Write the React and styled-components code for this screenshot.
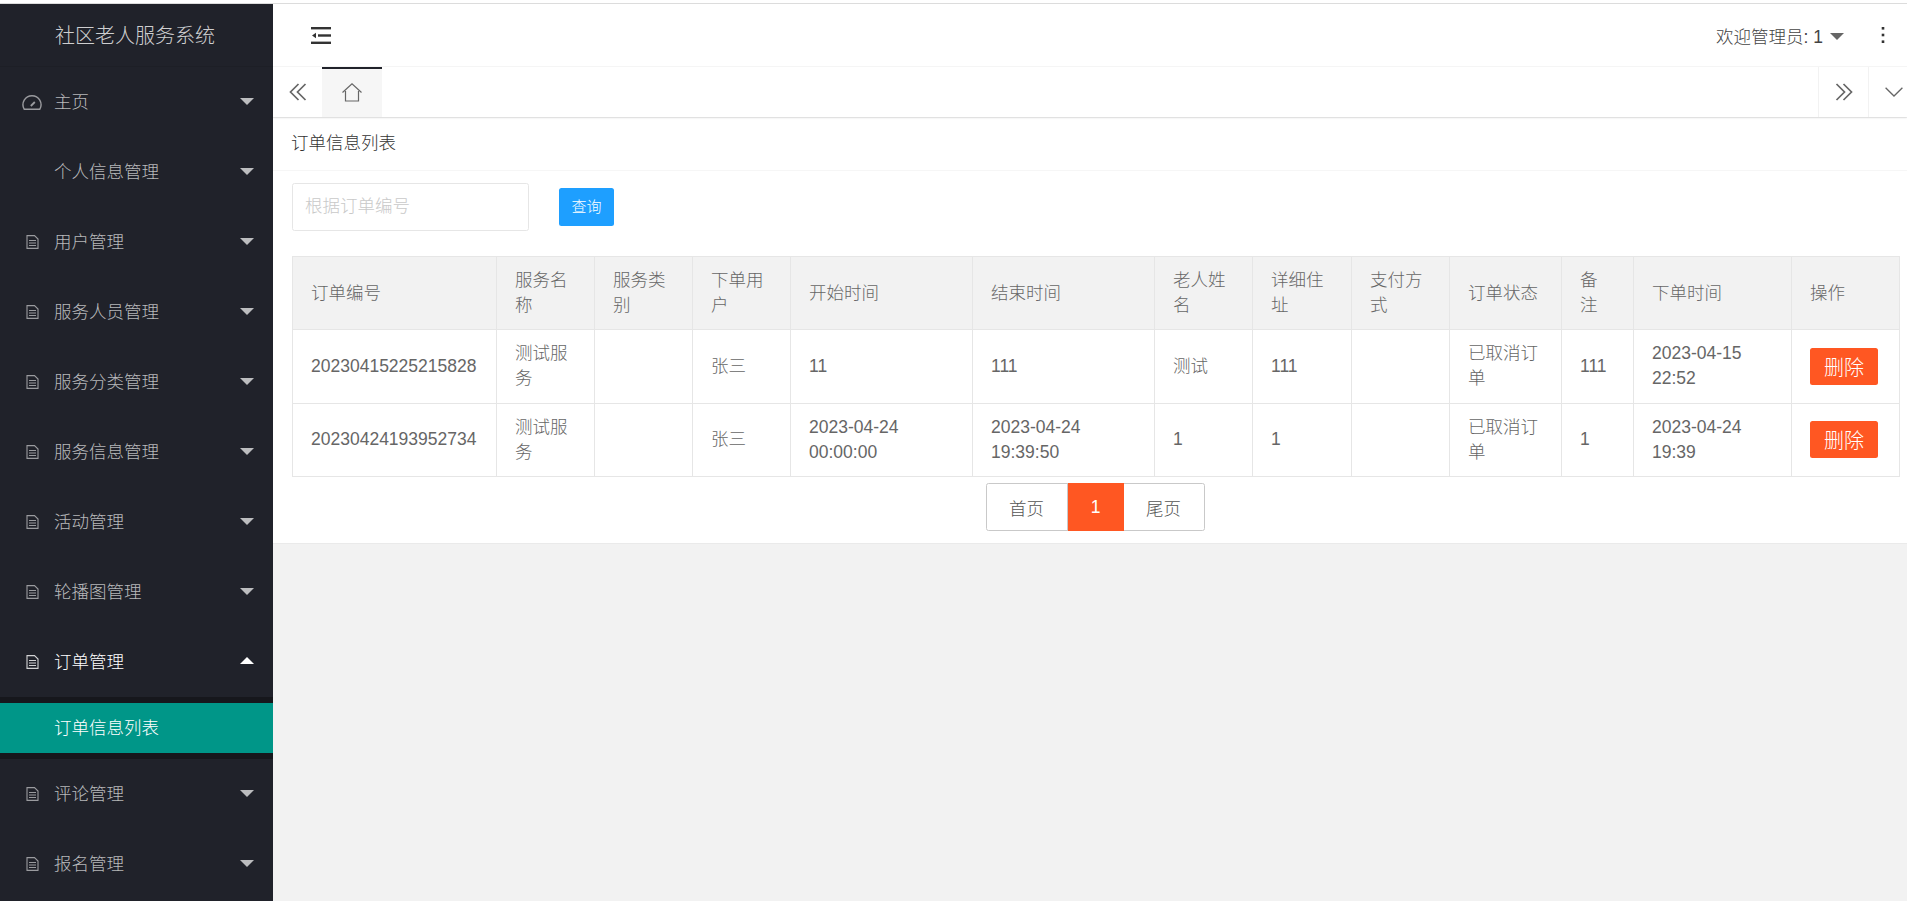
import React from "react";
import styled, { createGlobalStyle } from "styled-components";

const Global = createGlobalStyle`
  html, body { margin: 0; padding: 0; background: #f2f2f2; }
  * { box-sizing: border-box; }
  body { font-family: "Liberation Sans", "Noto Sans CJK SC", sans-serif; font-size: 17.5px; font-weight: 300; color: #666; }
`;

const Page = styled.div`
  width: 1907px; height: 901px; overflow: hidden; display: flex; flex-direction: column;
`;
const TopStrip = styled.div`
  height: 4px; flex: none; background: #fff; border-bottom: 1px solid #dcdcdc;
`;
const Body = styled.div`
  flex: 1; display: flex; min-height: 0;
`;
const Sidebar = styled.aside`
  width: 273px; flex: none; background: #20222a; overflow: hidden;
`;
const Logo = styled.div`
  height: 63px; padding: 0 0 2px 55px; display: flex; align-items: center;
  font-size: 20px; color: rgba(255,255,255,.8);
  border-bottom: 1px solid #1d1f26;
`;
const MenuItem = styled.div`
  height: 70px; display: flex; align-items: center; padding: 0 19px 4px 22px;
  color: ${p => (p.$open ? "#fff" : "rgba(255,255,255,.7)")};
`;
const IconSlot = styled.span`
  width: 20px; margin: 4px 12px 0 0; flex: none; display: flex; justify-content: center;
  color: ${p => (p.$open ? "rgba(255,255,255,.8)" : "rgba(255,255,255,.55)")};
`;
const Caret = styled.span`
  margin-left: auto; width: 0; height: 0;
  border-left: 7px solid transparent; border-right: 7px solid transparent;
  ${p => (p.$up
    ? "border-bottom: 7px solid #fff; margin-top: 1px;"
    : "border-top: 7px solid rgba(255,255,255,.7); margin-top: 3px;")}
`;
const SubMenu = styled.div`
  background: #16171c; padding: 6px 0;
`;
const SubItem = styled.div`
  height: 50px; background: #009688; color: #fff; display: flex; align-items: center; padding: 0 0 3px 54px;
`;
const Main = styled.main`
  flex: 1; min-width: 0; display: flex; flex-direction: column;
`;
const Header = styled.header`
  height: 63px; flex: none; background: #fff; border-bottom: 1px solid #f6f6f6;
  display: flex; align-items: center; padding: 0 0 0 38px; color: #333;
`;
const HeaderRight = styled.div`
  margin-left: auto; display: flex; align-items: center;
`;
const Welcome = styled.span`
  color: #444;
`;
const UserCaret = styled.span`
  margin-left: 7px; width: 0; height: 0; margin-top: 2px;
  border-left: 7px solid transparent; border-right: 7px solid transparent;
  border-top: 7px solid #666;
`;
const More = styled.span`
  display: flex; margin: 0 22px 0 37px;
`;
const TabBar = styled.nav`
  height: 50px; flex: none; background: #fff; display: flex;
  box-shadow: 0 1px 2px rgba(0,0,0,.1); position: relative;
`;
const TabButton = styled.span`
  width: ${p => p.$w}px; flex: none; display: flex; align-items: center; justify-content: center;
  color: #666; padding-left: ${p => p.$shift || 0}px; padding-bottom: 1px;
  ${p => p.$divided && "border-left: 1px solid #f2f2f2;"}
  ${p => p.$end && "margin-left: auto;"}
`;
const HomeTab = styled.span`
  width: 60px; flex: none; background: #f6f6f6; border-top: 2px solid #20222a;
  display: flex; align-items: center; justify-content: center; color: #666; padding-bottom: 2px;
`;
const Card = styled.section`
  background: #fff; flex: none; margin-top: 1px; border-bottom: 1px solid #eaeaea;
`;
const CardTitle = styled.div`
  height: 53px; padding: 0 0 5px 18px; display: flex; align-items: center;
  color: #333; border-bottom: 1px solid #f6f6f6;
`;
const CardBody = styled.div`
  padding: 12px 8px 12px 19px;
`;
const SearchRow = styled.div`
  display: flex; align-items: center; gap: 30px; margin-bottom: 25px;
`;
const SearchInput = styled.input`
  width: 237px; height: 48px; border: 1px solid #e6e6e6; border-radius: 2.5px;
  padding: 0 12px 1px; font: inherit; outline: none; background: #fff;
  &::placeholder { color: #c9c9c9; opacity: 1; }
`;
const QueryButton = styled.button`
  width: 55px; height: 38px; border: 0; border-radius: 2.5px; padding: 0 0 3px;
  background: #1e9fff; color: #fff; font: inherit; font-size: 15px;
`;
const Table = styled.table`
  width: 1607px; table-layout: fixed; border-collapse: collapse; line-height: 25px; color: #666;
`;
const Th = styled.th`
  border: 1px solid #e6e6e6; background: #f2f2f2; padding: 11px 19px 11px 18px;
  font-weight: 300; text-align: left; height: 73px;
`;
const Td = styled.td`
  border: 1px solid #e6e6e6; padding: 11px 19px 11px 18px; height: 73.5px;
`;
const DeleteButton = styled.button`
  display: block; width: 68px; height: 37px; border: 0; border-radius: 2.5px; padding: 3px 0 0;
  background: #ff5722; color: #fff; font: inherit; font-size: 20px; line-height: 34px;
`;
const Pager = styled.div`
  display: flex; justify-content: center; margin-top: 6px; padding-right: 1px;
`;
const PagerGroup = styled.div`
  display: flex; height: 48px; border: 1px solid #c9c9c9; border-radius: 2.5px;
`;
const PageLink = styled.span`
  display: flex; align-items: center; justify-content: center; width: ${p => p.$w}px;
  color: ${p => (p.$active ? "#fff" : "#555")};
  margin: ${p => (p.$active ? "-1px 0" : "0")};
  background: ${p => (p.$active ? "#ff5722" : "transparent")};
  ${p => p.$divided && "border-right: 1px solid #c9c9c9;"}
`;

const Gauge = () => (
  <svg width="20" height="15" viewBox="0 0 20 15" fill="none" stroke="currentColor" strokeWidth="1.4">
    <path d="M2.2 14.2 A9 9 0 1 1 17.8 14.2 Z" />
    <path d="M8.8 11 L12.8 7" strokeWidth="1.8" />
  </svg>
);
const Doc = () => (
  <svg width="13" height="14" viewBox="0 0 13 14" fill="none" stroke="currentColor" strokeWidth="1.1">
    <path d="M1 .6 H8.5 L12 4 V13.4 H1 Z" />
    <path d="M3 5.5 H10 M3 8 H10 M3 10.5 H10" />
  </svg>
);
const Shrink = () => (
  <svg width="20" height="17" viewBox="0 0 20 17" fill="#333">
    <rect x="0" y="0" width="20" height="2.4" />
    <rect x="7" y="7.3" width="13" height="2.4" />
    <rect x="0" y="14.6" width="20" height="2.4" />
    <path d="M1 8.5 L5 5.8 V11.2 Z" />
  </svg>
);
const DoubleLeft = () => (
  <svg width="18" height="18" viewBox="0 0 18 18" fill="none" stroke="currentColor" strokeWidth="1.7">
    <path d="M9.5 1 L1.5 9 L9.5 17 M16.5 1 L8.5 9 L16.5 17" />
  </svg>
);
const DoubleRight = () => (
  <svg width="18" height="18" viewBox="0 0 18 18" fill="none" stroke="currentColor" strokeWidth="1.7">
    <path d="M1.5 1 L9.5 9 L1.5 17 M8.5 1 L16.5 9 L8.5 17" />
  </svg>
);
const Down = () => (
  <svg width="18" height="10" viewBox="0 0 18 10" fill="none" stroke="currentColor" strokeWidth="1.3">
    <path d="M.6 .8 L9 9 L17.4 .8" />
  </svg>
);
const Home = () => (
  <svg width="20" height="19" viewBox="0 0 20 19" fill="none" stroke="currentColor" strokeWidth="1.2">
    <path d="M.5 9.5 L10 .8 L19.5 9.5" />
    <path d="M3.5 8 V18 H16.5 V8" />
  </svg>
);
const Dots = () => (
  <svg width="4" height="16" viewBox="0 0 4 16" fill="#333">
    <rect x="0.7" y="0" width="2.6" height="2.6" />
    <rect x="0.7" y="6.7" width="2.6" height="2.6" />
    <rect x="0.7" y="13.4" width="2.6" height="2.6" />
  </svg>
);

const menu = [
  { label: "主页", icon: <Gauge /> },
  { label: "个人信息管理" },
  { label: "用户管理", icon: <Doc /> },
  { label: "服务人员管理", icon: <Doc /> },
  { label: "服务分类管理", icon: <Doc /> },
  { label: "服务信息管理", icon: <Doc /> },
  { label: "活动管理", icon: <Doc /> },
  { label: "轮播图管理", icon: <Doc /> },
  { label: "订单管理", icon: <Doc />, open: true, sub: "订单信息列表" },
  { label: "评论管理", icon: <Doc /> },
  { label: "报名管理", icon: <Doc /> },
];

const widths = [204, 98, 98, 98, 182, 182, 98, 99, 98, 112, 72, 158, 108];
const headers = ["订单编号", "服务名称", "服务类别", "下单用户", "开始时间", "结束时间", "老人姓名", "详细住址", "支付方式", "订单状态", "备注", "下单时间", "操作"];
const rows = [
  ["20230415225215828", "测试服务", "", "张三", "11", "111", "测试", "111", "", "已取消订单", "111", "2023-04-15 22:52"],
  ["20230424193952734", "测试服务", "", "张三", "2023-04-24 00:00:00", "2023-04-24 19:39:50", "1", "1", "", "已取消订单", "1", "2023-04-24 19:39"],
];

export default function App() {
  return (
    <Page>
      <Global />
      <TopStrip />
      <Body>
        <Sidebar>
          <Logo>社区老人服务系统</Logo>
          {menu.map(m => (
            <React.Fragment key={m.label}>
              <MenuItem $open={m.open}>
                <IconSlot $open={m.open}>{m.icon}</IconSlot>
                {m.label}
                <Caret $up={m.open} />
              </MenuItem>
              {m.sub && (
                <SubMenu>
                  <SubItem>{m.sub}</SubItem>
                </SubMenu>
              )}
            </React.Fragment>
          ))}
        </Sidebar>
        <Main>
          <Header>
            <Shrink />
            <HeaderRight>
              <Welcome>欢迎管理员: 1</Welcome>
              <UserCaret />
              <More><Dots /></More>
            </HeaderRight>
          </Header>
          <TabBar>
            <TabButton $w={49}><DoubleLeft /></TabButton>
            <HomeTab><Home /></HomeTab>
            <TabButton $w={50} $divided $end><DoubleRight /></TabButton>
            <TabButton $w={39} $divided $shift={12}><Down /></TabButton>
          </TabBar>
          <Card>
            <CardTitle>订单信息列表</CardTitle>
            <CardBody>
              <SearchRow>
                <SearchInput placeholder="根据订单编号" />
                <QueryButton>查询</QueryButton>
              </SearchRow>
              <Table>
                <colgroup>
                  {widths.map((w, i) => <col key={i} style={{ width: w }} />)}
                </colgroup>
                <thead>
                  <tr>{headers.map(h => <Th key={h}>{h}</Th>)}</tr>
                </thead>
                <tbody>
                  {rows.map(r => (
                    <tr key={r[0]}>
                      {r.map((c, i) => <Td key={i}>{c}</Td>)}
                      <Td><DeleteButton>删除</DeleteButton></Td>
                    </tr>
                  ))}
                </tbody>
              </Table>
              <Pager>
                <PagerGroup>
                  <PageLink $w={81} $divided>首页</PageLink>
                  <PageLink $w={56} $active>1</PageLink>
                  <PageLink $w={80}>尾页</PageLink>
                </PagerGroup>
              </Pager>
            </CardBody>
          </Card>
        </Main>
      </Body>
    </Page>
  );
}
